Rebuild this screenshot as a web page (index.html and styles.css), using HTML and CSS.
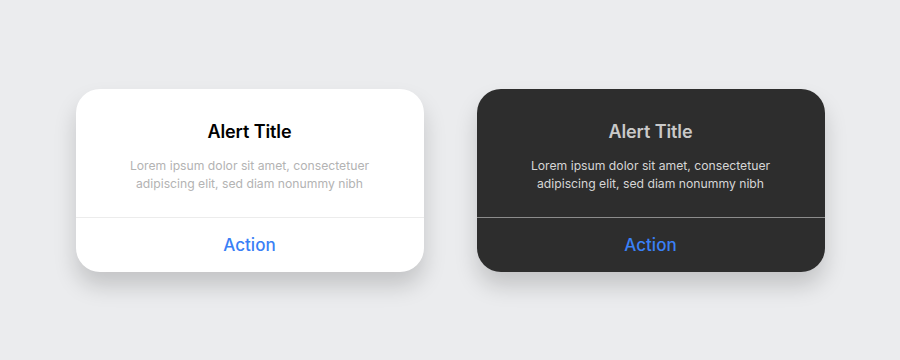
FILE: index.html
```html
<!DOCTYPE html>
<html lang="en">
<head>
<meta charset="utf-8">
<title>Alerts</title>
<link rel="stylesheet" href="styles.css">
</head>
<body>
<main class="stage">
  <section class="alert alert-light">
    <div class="alert-content">
      <h2 class="alert-title">Alert Title</h2>
      <p class="alert-body">Lorem ipsum dolor sit amet, consectetuer<br>adipiscing elit, sed diam nonummy nibh</p>
    </div>
    <div class="alert-action">Action</div>
  </section>
  <section class="alert alert-dark">
    <div class="alert-content">
      <h2 class="alert-title">Alert Title</h2>
      <p class="alert-body">Lorem ipsum dolor sit amet, consectetuer<br>adipiscing elit, sed diam nonummy nibh</p>
    </div>
    <div class="alert-action">Action</div>
  </section>
</main>
</body>
</html>
```

FILE: styles.css
```css
* { box-sizing: border-box; }
html, body { margin: 0; padding: 0; }
body {
  background: #ebecee;
  font-family: Inter, "Noto Sans", sans-serif;
  width: 900px;
  height: 360px;
  overflow: hidden;
}
.stage {
  height: 360px;
  display: flex;
  align-items: center;
  justify-content: center;
  gap: 53px;
}
.alert {
  width: 348px;
  height: 183px;
  border-radius: 24px;
  display: flex;
  flex-direction: column;
  overflow: hidden;
  box-shadow: 0 14px 22px rgba(0, 0, 0, 0.17);
}
.alert-content {
  padding: 31px 14px 24px;
  text-align: center;
  border-bottom: 1px solid #ececec;
}
.alert-title {
  margin: 0;
  font-size: 18px;
  line-height: 24px;
  font-weight: 600;
  letter-spacing: -0.1px;
}
.alert-body {
  margin: 13px 0 0;
  font-size: 12.2px;
  line-height: 18px;
  font-weight: 400;
}
.alert-action {
  flex: 1;
  display: flex;
  align-items: center;
  justify-content: center;
  font-size: 17px;
  font-weight: 500;
  color: #3a80f6;
}
.alert-light { background: #ffffff; }
.alert-light .alert-title { color: #000000; }
.alert-light .alert-body { color: #b3b3b3; }
.alert-dark { background: #2d2d2d; }
.alert-dark .alert-content { border-bottom-color: #8c8c8c; }
.alert-dark .alert-title { color: #c9c9c9; }
.alert-dark .alert-body { color: #d6d6d6; }
```
